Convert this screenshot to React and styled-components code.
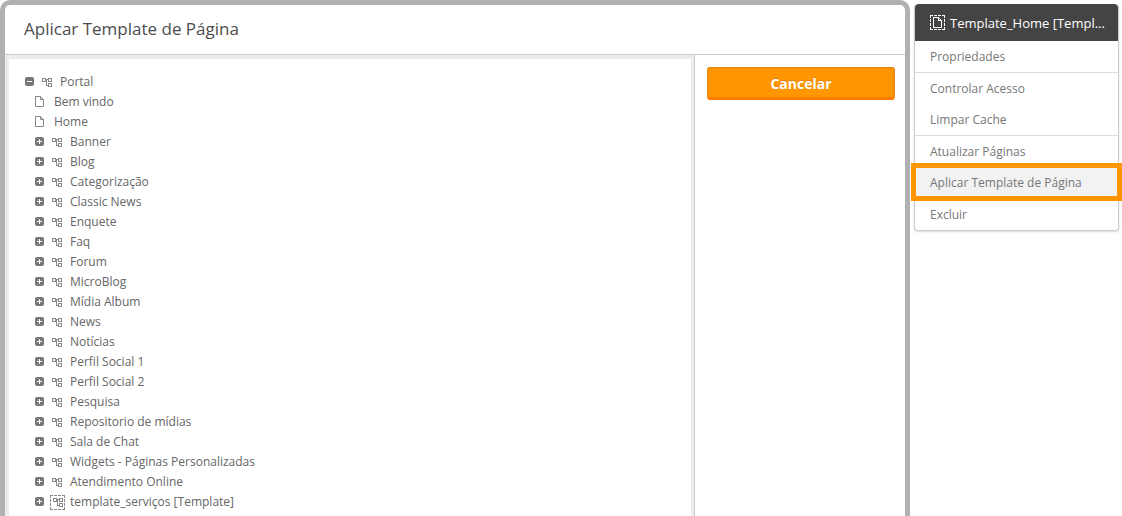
import { useState } from "react";
import styled, { createGlobalStyle } from "styled-components";

const GlobalStyle = createGlobalStyle`
    *, *::before, *::after{
        box-sizing: border-box;
    }
    body{
        margin: 0;
        background: #fff;
        color: #666;
        font-family: "Open Sans", "Noto Sans", sans-serif;
        font-size: 12px;
    }
    ul{
        list-style: none;
        margin: 0;
        padding: 0;
    }
    button{
        font-family: inherit;
        cursor: pointer;
    }
`

const Page = styled.main`
    display: flex;
    align-items: flex-start;
    gap: 4px;
    min-height: 100vh;
    padding-right: 3px;
`

const Dialog = styled.section`
    flex: 1;
    min-width: 0;
    align-self: stretch;
    display: flex;
    flex-direction: column;
    border: 5px solid #b1b1b1;
    border-bottom: 0;
    border-radius: 10px 10px 0 0;
    background: #fff;
`

const DialogHeader = styled.header`
    padding: 12px 19px 13px;
    border-bottom: 1px solid #ccc;
    & h1{
        margin: 0;
        color: #4d4d4d;
        font-size: 17px;
        font-weight: 400;
        line-height: 24px;
    }
`

const DialogBody = styled.div`
    flex: 1;
    display: flex;
`

const TreePanel = styled.div`
    flex: 1;
    padding: 13px 16px 4px;
    border: solid #ececec;
    border-width: 4px 3px 0 4px;
`

const Actions = styled.aside`
    width: 211px;
    padding: 12px 10px 12px 12px;
    border-left: 1px solid #ccc;
`

const CancelButton = styled.button`
    display: block;
    width: 100%;
    height: 33px;
    padding: 2px 0 0;
    border: 1px solid #e8800c;
    border-bottom: 3px solid #ff7a00;
    border-radius: 3px;
    background: #ff9600;
    color: #fff;
    font-size: 14px;
    font-weight: 700;
    text-shadow: 0 -1px 0 rgba(160, 80, 0, 0.3);
`

const Row = styled.div`
    display: flex;
    align-items: center;
    height: 20px;
    padding-left: ${({ $level }) => $level * 10}px;
    line-height: 20px;
    white-space: nowrap;
`

const Toggle = styled.button`
    display: flex;
    width: 9px;
    height: 9px;
    margin-bottom: 1px;
    padding: 0;
    border: 0;
    border-radius: 2px;
    background: #777;
`

const IconSlot = styled.span`
    display: flex;
    justify-content: center;
    width: ${({ $leaf }) => ($leaf ? "9px" : "26px")};
    margin-right: ${({ $leaf }) => ($leaf ? "10px" : "0")};
    color: #888;
`

const Menu = styled.nav`
    width: 205px;
    margin-top: 4px;
    border: 1px solid #ccc;
    border-top: 0;
    border-radius: 4px;
    background: #fff;
    box-shadow: 0 1px 2px rgba(0, 0, 0, 0.15);
`

const MenuTitle = styled.h2`
    display: flex;
    align-items: center;
    gap: 5px;
    height: 37px;
    margin: 0;
    padding: 0 8px 0 15px;
    border-radius: 4px 4px 0 0;
    background: #444;
    color: #fff;
    font-size: 13px;
    font-weight: 400;
    white-space: nowrap;
    & svg{
        flex: none;
    }
`

const MenuItem = styled.li`
    position: relative;
    border-bottom: ${({ $divider }) => ($divider ? "1px solid #ddd" : "0")};
    & button{
        display: block;
        width: 100%;
        height: 31px;
        padding: 0 15px;
        border: 0;
        background: ${({ $active }) => ($active ? "#f2f2f2" : "transparent")};
        color: #777;
        font-size: 12px;
        text-align: left;
    }
    &::after{
        content: "";
        display: ${({ $active }) => ($active ? "block" : "none")};
        position: absolute;
        inset: -4px -4px -3px;
        border: 5px solid #ff9600;
        pointer-events: none;
    }
`

const MenuList = styled.ul`
    & li:last-child button{
        border-radius: 0 0 4px 4px;
    }
`

const SitePaths = () => (
    <g fill="none" stroke="currentColor">
        <path d="M.5 .5h3v3h-3zM6.5 .5h3v3h-3zM6.5 5.5h3v3h-3z" />
        <path d="M3.5 1.5h3M4.5 1.5v6h2" />
    </g>
)

const PagePaths = () => (
    <g fill="none" stroke="currentColor">
        <path d="M.5 .5h5l3 3v7h-8z" />
        <path d="M5.5 .5v3h3" />
    </g>
)

const SiteIcon = () => (
    <svg width="10" height="10" viewBox="0 0 10 10" shapeRendering="crispEdges" aria-hidden="true">
        <g transform="translate(0 1)">
            <SitePaths />
        </g>
    </svg>
)

const PageIcon = () => (
    <svg width="9" height="12" viewBox="0 0 9 12" aria-hidden="true">
        <PagePaths />
    </svg>
)

const TemplateIcon = ({ site }) => (
    <svg width="15" height="15" viewBox="0 0 15 15" shapeRendering="crispEdges" aria-hidden="true">
        <path
            d="M0 .5h15M0 14.5h15M.5 0v15M14.5 0v15"
            fill="none"
            stroke="currentColor"
            strokeDasharray="3 1"
        />
        <g transform={site ? "translate(3 3)" : "translate(3 2)"}>
            {site ? <SitePaths /> : <PagePaths />}
        </g>
    </svg>
)

const ToggleSign = ({ open }) => (
    <svg width="9" height="9" viewBox="0 0 9 9" shapeRendering="crispEdges" aria-hidden="true">
        <path d={open ? "M2 4.5h5" : "M2 4.5h5M4.5 2v5"} stroke="#fff" />
    </svg>
)

const pages = [
    { name: "Bem vindo", type: "page" },
    { name: "Home", type: "page" },
    { name: "Banner" },
    { name: "Blog" },
    { name: "Categorização" },
    { name: "Classic News" },
    { name: "Enquete" },
    { name: "Faq" },
    { name: "Forum" },
    { name: "MicroBlog" },
    { name: "Mídia Album" },
    { name: "News" },
    { name: "Notícias" },
    { name: "Perfil Social 1" },
    { name: "Perfil Social 2" },
    { name: "Pesquisa" },
    { name: "Repositorio de mídias" },
    { name: "Sala de Chat" },
    { name: "Widgets - Páginas Personalizadas" },
    { name: "Atendimento Online" },
    { name: "template_serviços [Template]", type: "template" },
]

const menuItems = [
    { label: "Propriedades", divider: true },
    { label: "Controlar Acesso" },
    { label: "Limpar Cache", divider: true },
    { label: "Atualizar Páginas" },
    { label: "Aplicar Template de Página", divider: true, active: true },
    { label: "Excluir" },
]

const TreeRow = ({ name, type, level, open, onToggle }) => {
    const leaf = type === "page"
    return (
        <Row $level={level}>
            {!leaf && (
                <Toggle type="button" aria-label={name} aria-expanded={open} onClick={onToggle}>
                    <ToggleSign open={open} />
                </Toggle>
            )}
            <IconSlot $leaf={leaf}>
                {leaf ? <PageIcon /> : type === "template" ? <TemplateIcon site /> : <SiteIcon />}
            </IconSlot>
            <span>{name}</span>
        </Row>
    )
}

const App = () => {
    const [open, setOpen] = useState(true)

    return (
        <>
            <GlobalStyle />
            <Page>
                <Dialog role="dialog" aria-labelledby="dialog-title">
                    <DialogHeader>
                        <h1 id="dialog-title">Aplicar Template de Página</h1>
                    </DialogHeader>
                    <DialogBody>
                        <TreePanel>
                            <ul>
                                <li>
                                    <TreeRow name="Portal" level={0} open={open} onToggle={() => setOpen(!open)} />
                                    {open && (
                                        <ul>
                                            {pages.map((page) => (
                                                <li key={page.name}>
                                                    <TreeRow {...page} level={1} open={false} />
                                                </li>
                                            ))}
                                        </ul>
                                    )}
                                </li>
                            </ul>
                        </TreePanel>
                        <Actions>
                            <CancelButton type="button">Cancelar</CancelButton>
                        </Actions>
                    </DialogBody>
                </Dialog>

                <Menu>
                    <MenuTitle>
                        <TemplateIcon />
                        <span>Template_Home [Templ...</span>
                    </MenuTitle>
                    <MenuList>
                        {menuItems.map(({ label, divider, active }) => (
                            <MenuItem key={label} $divider={divider} $active={active}>
                                <button type="button">{label}</button>
                            </MenuItem>
                        ))}
                    </MenuList>
                </Menu>
            </Page>
        </>
    )
}

export default App;
